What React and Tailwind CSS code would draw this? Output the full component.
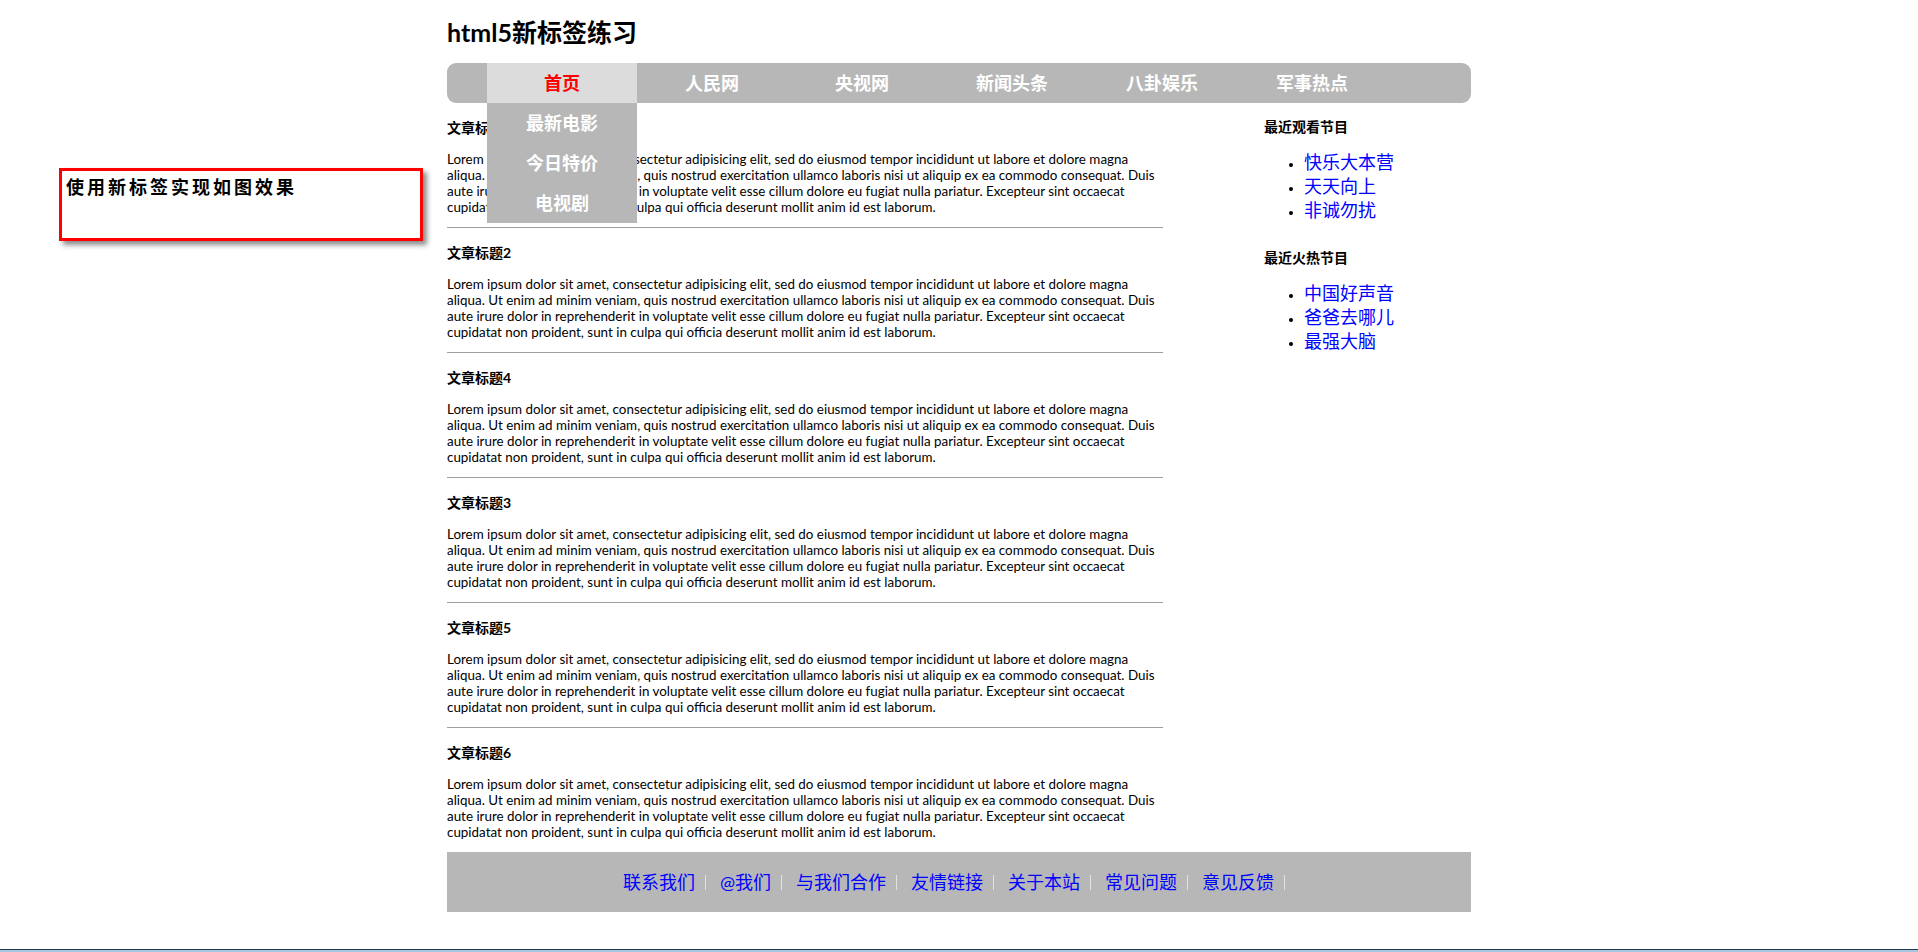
import React from "react";

const lorem =
  "Lorem ipsum dolor sit amet, consectetur adipisicing elit, sed do eiusmod tempor incididunt ut labore et dolore magna aliqua. Ut enim ad minim veniam, quis nostrud exercitation ullamco laboris nisi ut aliquip ex ea commodo consequat. Duis aute irure dolor in reprehenderit in voluptate velit esse cillum dolore eu fugiat nulla pariatur. Excepteur sint occaecat cupidatat non proident, sunt in culpa qui officia deserunt mollit anim id est laborum.";

const navItems = ["首页", "人民网", "央视网", "新闻头条", "八卦娱乐", "军事热点"];
const subMenu = ["最新电影", "今日特价", "电视剧"];
const articles = ["文章标题", "文章标题2", "文章标题4", "文章标题3", "文章标题5", "文章标题6"];
const watched = ["快乐大本营", "天天向上", "非诚勿扰"];
const hot = ["中国好声音", "爸爸去哪儿", "最强大脑"];
const footerLinks = ["联系我们", "@我们", "与我们合作", "友情链接", "关于本站", "常见问题", "意见反馈"];

const App = () => {
  return (
    <div className="min-h-[952px] flex flex-col bg-white text-black font-['Lato','Noto_Sans_CJK_SC',sans-serif]">
      <div className="grid grid-cols-[447px_1024px_1fr]">
        {/* note box */}
        <div>
          <div className="ml-[59px] mt-[168px] w-[364px] h-[73px] border-[3px] border-[#ff0000] shadow-[4px_4px_5px_rgba(0,0,0,0.45)] pl-[4px] pt-[3px]">
            <p className="text-[18px] leading-[24px] font-bold tracking-[3px] font-['Noto_Sans_CJK_SC',sans-serif]">
              使用新标签实现如图效果
            </p>
          </div>
        </div>

        {/* page */}
        <div>
          <h1 className="pt-[16px] text-[25px] leading-[33px] font-bold">html5新标签练习</h1>

          {/* Nav */}
          <nav className="mt-[14px] h-[40px] rounded-[9px] bg-[#b7b7b7]">
            <ul className="flex pl-[40px]">
              {navItems.map((item, i) => (
                <li
                  key={item}
                  className={
                    i === 0
                      ? "relative w-[150px] h-[40px] leading-[40px] text-center text-[18px] font-bold text-[#ff0000] bg-[#dcdcdc]"
                      : "w-[150px] h-[40px] leading-[40px] text-center text-[18px] font-bold text-white"
                  }
                >
                  {item}
                  {i === 0 && (
                    <ul className="absolute left-0 top-full w-[150px] bg-[#b7b7b7] z-10">
                      {subMenu.map((sub) => (
                        <li key={sub} className="h-[40px] leading-[40px] text-center text-white">
                          {sub}
                        </li>
                      ))}
                    </ul>
                  )}
                </li>
              ))}
            </ul>
          </nav>

          <div className="flex">
            {/* Articles */}
            <main className="w-[716px]">
              {articles.map((title, i) => (
                <article key={title}>
                  <h4 className="mt-[15px] text-[14px] leading-[20px] font-bold">{title}</h4>
                  <p className="mt-[13px] text-[13.4px] leading-[16px]">{lorem}</p>
                  {i < articles.length - 1 ? (
                    <div className="mt-[12px] h-px bg-[#a0a0a0]" />
                  ) : (
                    <div className="h-[12px]" />
                  )}
                </article>
              ))}
            </main>

            {/* Aside */}
            <aside className="ml-auto w-[207px]">
              <h4 className="mt-[14px] text-[14px] leading-[20px] font-bold">最近观看节目</h4>
              <ul className="mt-[13px] pl-[40px] list-disc">
                {watched.map((w) => (
                  <li key={w} className="h-[24px] text-[13px] leading-[24px]">
                    <a href="#" className="text-[18px] leading-[24px] text-[#0000ff]">{w}</a>
                  </li>
                ))}
              </ul>
              <h4 className="mt-[26px] text-[14px] leading-[20px] font-bold">最近火热节目</h4>
              <ul className="mt-[13px] pl-[40px] list-disc">
                {hot.map((w) => (
                  <li key={w} className="h-[24px] text-[13px] leading-[24px]">
                    <a href="#" className="text-[18px] leading-[24px] text-[#0000ff]">{w}</a>
                  </li>
                ))}
              </ul>
            </aside>
          </div>

          {/* Footer */}
          <footer className="h-[60px] bg-[#b7b7b7] flex items-center justify-center pr-[24px]">
            {footerLinks.map((f) => (
              <div key={f} className="flex items-center">
                <a href="#" className="pl-[14px] pr-[10px] text-[18px] leading-[24px] text-[#0000ff]">
                  {f}
                </a>
                <span className="w-px h-[15px] bg-[#e2e2e2]" />
              </div>
            ))}
          </footer>
        </div>
        <div />
      </div>

      {/* taskbar edge */}
      <div className="mt-auto h-[3px] border-t border-[#1d3a55] bg-[#a8c5de]" />
    </div>
  );
};

export default App;
